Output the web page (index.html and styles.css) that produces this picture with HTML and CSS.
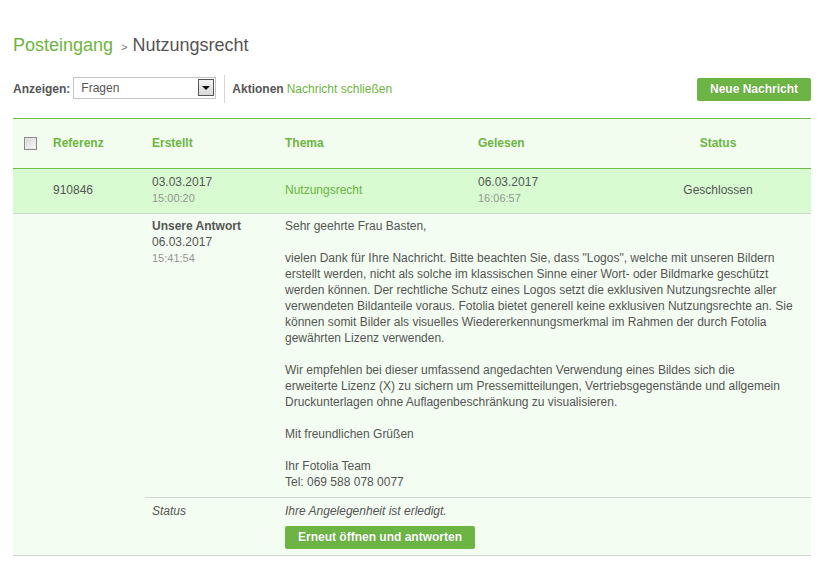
FILE: index.html
```html
<!DOCTYPE html>
<html lang="de">
<head>
<meta charset="utf-8">
<title>Nutzungsrecht</title>
<link rel="stylesheet" href="styles.css">
</head>
<body>
<div class="page">
  <h1 class="crumbs"><span class="crumb-link">Posteingang</span><span class="crumb-sep">&gt;</span><span class="crumb-current">Nutzungsrecht</span></h1>

  <div class="toolbar">
    <div class="tool-left">
      <span class="label">Anzeigen:</span>
      <div class="select">
        <span class="select-value">Fragen</span>
        <span class="select-btn"><span class="select-arrow"></span></span>
      </div>
      <span class="vsep"></span>
      <span class="label">Aktionen</span>
      <span class="link">Nachricht schließen</span>
    </div>
    <span class="btn">Neue Nachricht</span>
  </div>

  <table class="msgs">
    <colgroup>
      <col class="c1"><col class="c2"><col class="c3"><col class="c4"><col class="c5"><col class="c6">
    </colgroup>
    <thead>
      <tr class="head">
        <th class="chk-cell"><span class="chk"></span></th>
        <th>Referenz</th>
        <th>Erstellt</th>
        <th>Thema</th>
        <th>Gelesen</th>
        <th class="center">Status</th>
      </tr>
    </thead>
    <tbody>
      <tr class="row">
        <td></td>
        <td class="mid">910846</td>
        <td><div>03.03.2017</div><div class="time">15:00:20</div></td>
        <td class="mid link">Nutzungsrecht</td>
        <td><div>06.03.2017</div><div class="time">16:06:57</div></td>
        <td class="mid center">Geschlossen</td>
      </tr>
      <tr class="detail">
        <td colspan="2"></td>
        <td><div class="strong">Unsere Antwort</div><div>06.03.2017</div><div class="time">15:41:54</div></td>
        <td colspan="3" class="message">Sehr geehrte Frau Basten,<br>
<br>
vielen Dank für Ihre Nachricht. Bitte beachten Sie, dass "Logos", welche mit unseren Bildern<br>
erstellt werden, nicht als solche im klassischen Sinne einer Wort- oder Bildmarke geschützt<br>
werden können. Der rechtliche Schutz eines Logos setzt die exklusiven Nutzungsrechte aller<br>
verwendeten Bildanteile voraus. Fotolia bietet generell keine exklusiven Nutzungsrechte an. Sie<br>
können somit Bilder als visuelles Wiedererkennungsmerkmal im Rahmen der durch Fotolia<br>
gewährten Lizenz verwenden.<br>
<br>
Wir empfehlen bei dieser umfassend angedachten Verwendung eines Bildes sich die<br>
erweiterte Lizenz (X) zu sichern um Pressemitteilungen, Vertriebsgegenstände und allgemein<br>
Druckunterlagen ohne Auflagenbeschränkung zu visualisieren.<br>
<br>
Mit freundlichen Grüßen<br>
<br>
Ihr Fotolia Team<br>
Tel: 069 588 078 0077</td>
      </tr>
      <tr class="status-row">
        <td colspan="2" class="blank"></td>
        <td class="em">Status</td>
        <td colspan="3"><div class="em">Ihre Angelegenheit ist erledigt.</div><span class="btn btn-small">Erneut öffnen und antworten</span></td>
      </tr>
    </tbody>
  </table>
</div>
</body>
</html>
```

FILE: styles.css
```css
html, body {
  margin: 0;
  padding: 0;
  background: #ffffff;
}

body {
  font-family: "Liberation Sans", Arial, sans-serif;
  font-size: 12px;
  color: #555555;
}

.page {
  width: 798px;
  padding: 34px 19px 0 13px;
}

.crumbs {
  margin: 0;
  font-size: 18px;
  font-weight: normal;
  line-height: 22px;
  display: flex;
  align-items: baseline;
}

.crumb-link {
  color: #6db540;
}

.crumb-sep {
  font-size: 11px;
  color: #777777;
  margin: 0 5px 0 8px;
}

.crumb-current {
  color: #555555;
}

.toolbar {
  margin-top: 17px;
  height: 28px;
  display: flex;
  align-items: center;
  justify-content: space-between;
}

.tool-left {
  display: flex;
  align-items: center;
  height: 100%;
}

.label {
  font-weight: bold;
  color: #555555;
}

.link {
  color: #6db540;
}

.tool-left .link {
  margin-left: 3px;
}

.select {
  margin-left: 3px;
  width: 141px;
  height: 20px;
  border: 1px solid #c4c4c4;
  background: #ffffff;
  display: flex;
  align-items: center;
  justify-content: space-between;
  margin-top: -3px;
}

.select-value {
  padding-left: 7px;
  color: #555555;
}

.select-btn {
  width: 14px;
  height: 15px;
  margin-right: 1px;
  border: 1px solid #555555;
  background: linear-gradient(#f4f4f4, #d9d9d9);
  display: flex;
  align-items: center;
  justify-content: center;
}

.select-arrow {
  width: 0;
  height: 0;
  border-left: 4px solid transparent;
  border-right: 4px solid transparent;
  border-top: 4px solid #111111;
  margin-top: 1px;
}

.vsep {
  width: 1px;
  height: 28px;
  background: #d6d6d6;
  margin: 0 7px 0 8px;
}

.btn {
  display: inline-block;
  height: 23px;
  line-height: 23px;
  padding: 0 13px;
  background: #6cb545;
  color: #ffffff;
  font-weight: bold;
  border-radius: 2px;
  text-shadow: 0 0 1px rgba(40, 80, 20, 0.35);
  white-space: nowrap;
}

.toolbar .btn {
  margin-top: 1px;
}

.msgs {
  margin-top: 15px;
  width: 798px;
  border-collapse: collapse;
  table-layout: fixed;
}

col.c1 { width: 33px; }
col.c2 { width: 99px; }
col.c3 { width: 133px; }
col.c4 { width: 193px; }
col.c5 { width: 154px; }
col.c6 { width: 186px; }

.msgs th,
.msgs td {
  padding: 0 0 0 7px;
  text-align: left;
  line-height: 16px;
  vertical-align: top;
}

.head th {
  background: #f2fdf0;
  border-top: 1px solid #6fbd45;
  border-bottom: 1px solid #6fbd45;
  color: #6db540;
  font-weight: bold;
  padding-top: 16px;
  padding-bottom: 17px;
  vertical-align: middle;
}

.head th.chk-cell {
  padding-left: 11px;
}

.chk {
  display: block;
  width: 11px;
  height: 11px;
  border: 1px solid #8a8a8a;
  background: linear-gradient(135deg, #d4d4d4, #fbfbfb);
  box-shadow: inset 0 0 0 1px #e9e9e9;
}

.msgs .center {
  text-align: center;
  padding-right: 7px;
}

.row td {
  background: #d8fbd1;
  border-bottom: 1px solid #cfd8cd;
  padding-top: 5px;
  padding-bottom: 7px;
}

.row td.mid {
  vertical-align: middle;
}

.time {
  font-size: 11px;
  color: #959595;
}

.detail td {
  background: #f3fdf1;
  padding-top: 4px;
  padding-bottom: 7px;
}

.strong {
  font-weight: bold;
}

.message {
  white-space: nowrap;
}

.status-row td {
  background: #f3fdf1;
  border-top: 1px solid #d3d7d2;
  border-bottom: 1px solid #d3d7d2;
  padding-top: 5px;
  padding-bottom: 6px;
}

.status-row td.blank {
  border-top: none;
}

.em {
  font-style: italic;
}

.btn-small {
  margin-top: 7px;
}
```
